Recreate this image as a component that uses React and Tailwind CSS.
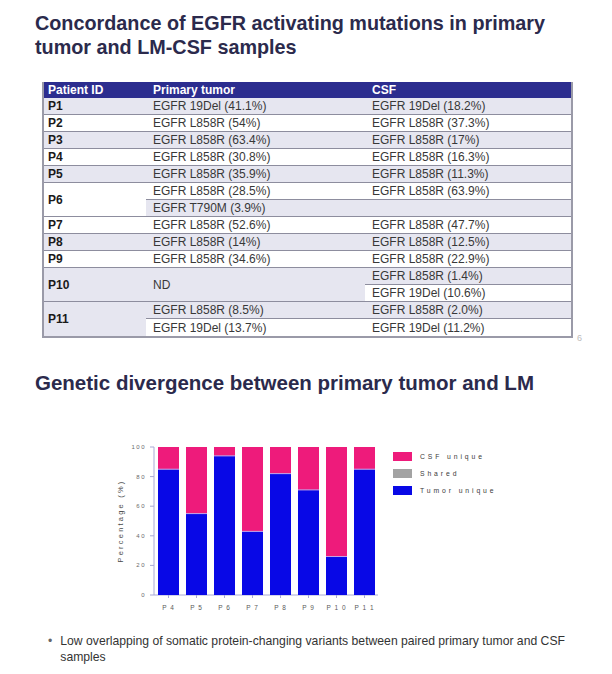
import React from "react";

const ROWS = [
  { id: "P1", primary: "EGFR 19Del (41.1%)", csf: "EGFR 19Del (18.2%)", shade: true },
  { id: "P2", primary: "EGFR L858R (54%)", csf: "EGFR L858R (37.3%)", shade: false },
  { id: "P3", primary: "EGFR L858R (63.4%)", csf: "EGFR L858R (17%)", shade: true },
  { id: "P4", primary: "EGFR L858R (30.8%)", csf: "EGFR L858R (16.3%)", shade: false },
  { id: "P5", primary: "EGFR L858R (35.9%)", csf: "EGFR L858R (11.3%)", shade: true },
];

const BARS = [
  { label: "P 4", tumor: 85 },
  { label: "P 5", tumor: 55 },
  { label: "P 6", tumor: 94 },
  { label: "P 7", tumor: 43 },
  { label: "P 8", tumor: 82 },
  { label: "P 9", tumor: 71 },
  { label: "P 1 0", tumor: 26 },
  { label: "P 1 1", tumor: 85 },
];

const LINE = "border-b-[1.5px] border-[#8d8d9e]";
const SHADE = "bg-[#e6e6f0]";
const FONT = "Liberation Sans, Arial, sans-serif";

function Cell({ children, shade, bold, span, line = true }) {
  return (
    <div
      className={`flex items-center whitespace-nowrap overflow-hidden ${line ? LINE : ""} ${
        shade ? SHADE : "bg-white"
      } ${bold ? "pl-[4px] font-bold text-[#1a1a1a]" : "pl-[7px] text-[#383838]"} ${span ? "row-span-2" : ""}`}
    >
      {children}
    </div>
  );
}

function Chart() {
  const top = 17;
  const h = 148;
  const y0 = top + h;
  return (
    <svg width="612" height="190" className="block">
      <line x1="154" y1={top} x2="154" y2={y0} stroke="#a9a9d6" strokeWidth="1" />
      <line x1="154" y1={y0} x2="378" y2={y0} stroke="#a9a9d6" strokeWidth="1" />
      {[0, 20, 40, 60, 80, 100].map((v) => {
        const y = y0 - (v / 100) * h;
        return (
          <g key={v}>
            <line x1="150" y1={y} x2="154" y2={y} stroke="#a9a9d6" strokeWidth="1" />
            <text x="146" y={y + 2} textAnchor="end" fontSize="6" letterSpacing="1.5" fill="#6a6a6a" fontFamily={FONT}>
              {v}
            </text>
          </g>
        );
      })}
      <text
        transform={`translate(123 ${top + h / 2}) rotate(-90)`}
        textAnchor="middle"
        fontSize="7.5"
        letterSpacing="2.2"
        fill="#4a4a4a"
        fontFamily={FONT}
      >
        Percentage (%)
      </text>
      {BARS.map((b, i) => {
        const x = 158 + i * 28;
        const by = y0 - (b.tumor / 100) * h;
        return (
          <g key={b.label}>
            <rect x={x} y={top} width="21" height={by - top} fill="#ee1b7b" />
            <rect x={x} y={by} width="21" height={y0 - by} fill="#0808e6" />
            <line x1={x} y1={by} x2={x + 21} y2={by} stroke="#c9a3e6" strokeWidth="1" />
            <line x1={x + 10.5} y1={y0} x2={x + 10.5} y2={y0 + 3} stroke="#a9a9d6" strokeWidth="1" />
            <text x={x + 10.5} y={y0 + 15} textAnchor="middle" fontSize="6.5" letterSpacing="1" fill="#5a5a5a" fontFamily={FONT}>
              {b.label}
            </text>
          </g>
        );
      })}
      {[
        { c: "#ee1b7b", t: "CSF unique" },
        { c: "#a3a3a3", t: "Shared" },
        { c: "#0808e6", t: "Tumor unique" },
      ].map((l, i) => (
        <g key={l.t}>
          <rect x="393" y={22 + i * 17} width="19" height="9" fill={l.c} />
          <text x="420" y={29 + i * 17} fontSize="6.8" letterSpacing="2.9" fill="#3a3a3a" fontFamily={FONT}>
            {l.t}
          </text>
        </g>
      ))}
    </svg>
  );
}

export default function App() {
  return (
    <div className="w-[612px] h-[674px] bg-white overflow-hidden font-['Liberation_Sans',Arial,sans-serif]">
      <h1 className="pl-[35px] pt-[11px] text-[19.8px] leading-[24px] font-bold text-[#2b2a4c]">
        Concordance of EGFR activating mutations in primary
        <br />
        tumor and LM-CSF samples
      </h1>

      <div className="flex items-end mt-[23px]">
        <div className="ml-[42px] w-[531px] border-x-2 border-b-2 border-[#9a9aa8] text-[12px] leading-[12px]">
          <div className="grid grid-cols-[102px_219px_206px] grid-rows-[16px_repeat(14,17px)]">
            <div className="flex items-center pl-[4px] bg-[#2c2d8f] text-white font-bold">Patient ID</div>
            <div className="flex items-center pl-[7px] bg-[#2c2d8f] text-white font-bold">Primary tumor</div>
            <div className="flex items-center pl-[7px] bg-[#2c2d8f] text-white font-bold">CSF</div>

            {ROWS.map((r) => (
              <React.Fragment key={r.id}>
                <Cell shade={r.shade} bold>{r.id}</Cell>
                <Cell shade={r.shade}>{r.primary}</Cell>
                <Cell shade={r.shade}>{r.csf}</Cell>
              </React.Fragment>
            ))}

            <Cell bold span>P6</Cell>
            <Cell>EGFR L858R (28.5%)</Cell>
            <Cell>EGFR L858R (63.9%)</Cell>
            <Cell shade>EGFR T790M (3.9%)</Cell>
            <Cell shade />

            <Cell bold>P7</Cell>
            <Cell>EGFR L858R (52.6%)</Cell>
            <Cell>EGFR L858R (47.7%)</Cell>
            <Cell shade bold>P8</Cell>
            <Cell shade>EGFR L858R (14%)</Cell>
            <Cell shade>EGFR L858R (12.5%)</Cell>
            <Cell bold>P9</Cell>
            <Cell>EGFR L858R (34.6%)</Cell>
            <Cell>EGFR L858R (22.9%)</Cell>

            <Cell shade bold span>P10</Cell>
            <Cell shade span>ND</Cell>
            <Cell shade>EGFR L858R (1.4%)</Cell>
            <Cell>EGFR 19Del (10.6%)</Cell>

            <Cell shade bold span line={false}>P11</Cell>
            <Cell shade>EGFR L858R (8.5%)</Cell>
            <Cell shade>EGFR L858R (2.0%)</Cell>
            <Cell line={false}>EGFR 19Del (13.7%)</Cell>
            <Cell line={false}>EGFR 19Del (11.2%)</Cell>
          </div>
        </div>
        <div className="ml-[4px] mb-[-6px] text-[9px] leading-[12px] text-[#bdbdbd]">6</div>
      </div>

      <h2 className="pl-[35px] mt-[33px] text-[20.5px] leading-[24px] font-bold text-[#2b2a4c]">
        Genetic divergence between primary tumor and LM
      </h2>

      <div className="mt-[35px]">
        <Chart />
      </div>

      <div className="flex gap-[8px] pl-[48px] pr-[40px] mt-[13px] text-[12.2px] leading-[16px] text-[#333]">
        <span className="text-[#666]">•</span>
        <p>
          Low overlapping of somatic protein-changing variants between paired primary tumor and CSF samples
        </p>
      </div>
    </div>
  );
}
